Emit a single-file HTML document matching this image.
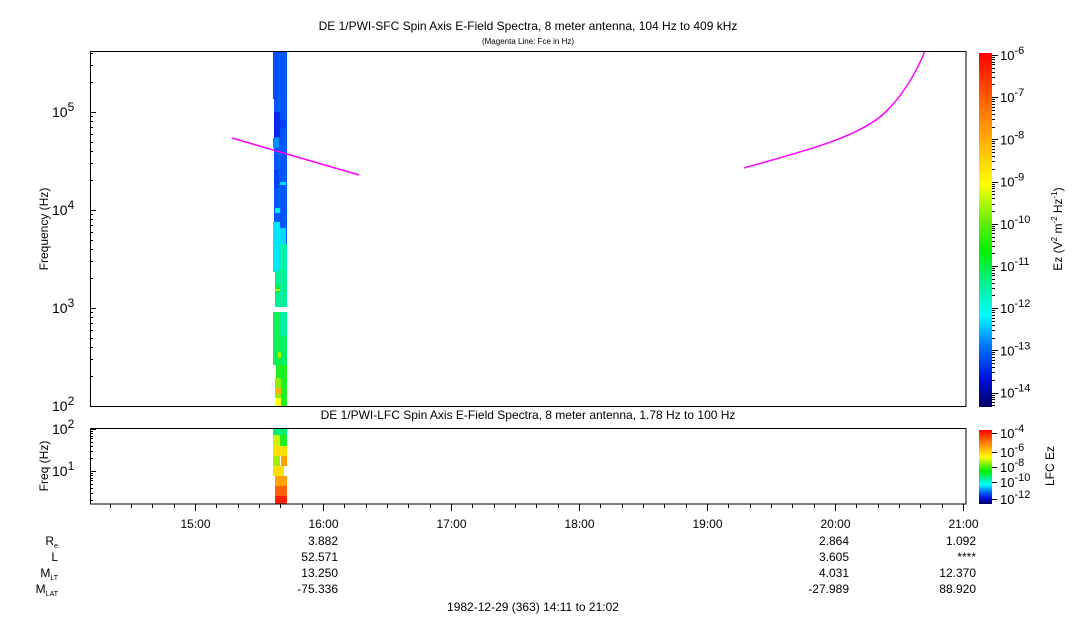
<!DOCTYPE html>
<html><head><meta charset="utf-8"><style>
html,body{margin:0;padding:0;background:#fff;}
svg{display:block;font-family:"Liberation Sans",sans-serif;}
</style></head><body>
<svg id="s" width="1083" height="620" viewBox="0 0 1083 620" xmlns="http://www.w3.org/2000/svg">
<defs>
<linearGradient id="cb" x1="0" y1="0" x2="0" y2="1">
<stop offset="0" stop-color="#ff0000"/>
<stop offset="0.13" stop-color="#ff6000"/>
<stop offset="0.25" stop-color="#ffb000"/>
<stop offset="0.37" stop-color="#ffff00"/>
<stop offset="0.48" stop-color="#60f000"/>
<stop offset="0.56" stop-color="#00f000"/>
<stop offset="0.66" stop-color="#00f0a0"/>
<stop offset="0.74" stop-color="#00ffff"/>
<stop offset="0.82" stop-color="#0080ff"/>
<stop offset="0.92" stop-color="#0010e0"/>
<stop offset="1" stop-color="#000060"/>
</linearGradient>
</defs>
<text x="528" y="30" font-size="12" text-anchor="middle">DE 1/PWI-SFC  Spin Axis E-Field Spectra, 8 meter antenna, 104 Hz to 409 kHz</text>
<text x="528" y="44" font-size="8" text-anchor="middle">(Magenta Line: Fce in Hz)</text>
<text x="528" y="419" font-size="12" text-anchor="middle">DE 1/PWI-LFC  Spin Axis E-Field Spectra, 8 meter antenna, 1.78 Hz to 100 Hz</text>

<!-- top spectra -->
<rect x="274" y="51" width="13" height="195" fill="#0058ff"/>
<rect x="273" y="51" width="6" height="48" fill="#0050ff"/>
<rect x="274" y="112" width="6" height="25" fill="#0028f0"/>
<rect x="280" y="120" width="6" height="8" fill="#0040ff"/>
<rect x="273" y="138" width="6" height="10" fill="#0090ff"/>
<rect x="274" y="170" width="5" height="18" fill="#0040f8"/>
<rect x="280" y="182" width="6" height="3" fill="#00e0ff"/>
<rect x="275" y="208" width="5" height="5" fill="#00f0e0"/>
<rect x="273" y="222" width="7" height="50" fill="#00e8ff"/>
<rect x="280" y="228" width="6" height="20" fill="#00d8ff"/>
<rect x="279" y="244" width="8" height="30" fill="#00f0b0"/>
<rect x="275" y="270" width="12" height="37" fill="#00f098"/>
<rect x="275" y="285" width="5" height="8" fill="#00f040"/>
<rect x="275" y="289" width="5" height="2" fill="#d0f000"/>
<rect x="273" y="312" width="6" height="53" fill="#10f050"/>
<rect x="279" y="312" width="8" height="30" fill="#00f0a0"/>
<rect x="279" y="336" width="8" height="30" fill="#00f060"/>
<rect x="278" y="352" width="3" height="6" fill="#a0f000"/>
<rect x="276" y="365" width="11" height="41" fill="#20f020"/>
<rect x="275" y="378" width="6" height="20" fill="#90f000"/>
<rect x="276" y="388" width="5" height="6" fill="#ffb000"/>
<rect x="276" y="398" width="5" height="8" fill="#ffff00"/>

<!-- bottom spectra -->
<rect x="273" y="429" width="14" height="6" fill="#00f070"/>
<rect x="273" y="435" width="7" height="11" fill="#d0f000"/>
<rect x="280" y="435" width="7" height="11" fill="#20f020"/>
<rect x="273" y="446" width="14" height="10" fill="#ffe000"/>
<rect x="273" y="456" width="7" height="10" fill="#a0f000"/>
<rect x="281" y="456" width="6" height="10" fill="#ffa000"/>
<rect x="273" y="466" width="11" height="10" fill="#ffe000"/>
<rect x="275" y="476" width="12" height="10" fill="#ffa000"/>
<rect x="275" y="486" width="12" height="10" fill="#ff6000"/>
<rect x="275" y="496" width="12" height="8" fill="#ff2000"/>

<!-- magenta -->
<path d="M232,138 Q290,155 359,175" fill="none" stroke="#ff00ff" stroke-width="1.5"/>
<path d="M744,168 C800,152 850,140 880,117 C900,100 915,75 925,51" fill="none" stroke="#ff00ff" stroke-width="1.5"/>

<!-- frames -->
<rect x="90.5" y="51.5" width="875.5" height="355" fill="none" stroke="#000" stroke-width="1"/>
<rect x="90.5" y="428.5" width="875.5" height="75.5" fill="none" stroke="#000" stroke-width="1"/>
<g id="ticks" stroke="#000" stroke-width="1"></g>
<g id="lbl" font-size="12"></g>

<text transform="translate(48,229) rotate(-90)" font-size="12" text-anchor="middle">Frequency (Hz)</text>
<text transform="translate(48,466) rotate(-90)" font-size="12" text-anchor="middle">Freq (Hz)</text>

<!-- colorbars -->
<rect x="979" y="53" width="13" height="354" fill="url(#cb)"/>
<rect x="979" y="430" width="13" height="74" fill="url(#cb)"/>
<text transform="translate(1062,229) rotate(-90)" font-size="12" text-anchor="middle">Ez (V<tspan font-size="8" dy="-5">2</tspan><tspan dy="5"> m</tspan><tspan font-size="8" dy="-5">-2</tspan><tspan dy="5"> Hz</tspan><tspan font-size="8" dy="-5">-1</tspan><tspan dy="5">)</tspan></text>
<text transform="translate(1054,466) rotate(-90)" font-size="12" text-anchor="middle">LFC Ez</text>

<!-- bottom labels -->
<g font-size="12" text-anchor="end">
<text x="58" y="545">R<tspan font-size="7" dy="3">e</tspan></text>
<text x="58" y="561">L</text>
<text x="58" y="577">M<tspan font-size="7" dy="3">LT</tspan></text>
<text x="58" y="593">M<tspan font-size="7" dy="3">LAT</tspan></text>
<text x="338" y="545">3.882</text><text x="338" y="561">52.571</text><text x="338" y="577">13.250</text><text x="338" y="593">-75.336</text>
<text x="849" y="545">2.864</text><text x="849" y="561">3.605</text><text x="849" y="577">4.031</text><text x="849" y="593">-27.989</text>
<text x="976" y="545">1.092</text><text x="976" y="561">****</text><text x="976" y="577">12.370</text><text x="976" y="593">88.920</text>
</g>
<text x="533" y="611" font-size="12" text-anchor="middle">1982-12-29 (363) 14:11 to 21:02</text>
</svg>
<script>
var NS="http://www.w3.org/2000/svg",T=document.getElementById('ticks'),L=document.getElementById('lbl');
function ln(x1,y1,x2,y2){var e=document.createElementNS(NS,'line');e.setAttribute('x1',x1);e.setAttribute('y1',y1);e.setAttribute('x2',x2);e.setAttribute('y2',y2);T.appendChild(e);}
function tx(x,y,s,anc,sup,fs){var e=document.createElementNS(NS,'text');e.setAttribute('x',x);e.setAttribute('y',y);if(anc)e.setAttribute('text-anchor',anc);if(fs)e.setAttribute('font-size',fs);e.textContent=s;if(sup){var t=document.createElementNS(NS,'tspan');t.setAttribute('dy','-6');t.setAttribute('font-size',fs?fs-2:10);t.textContent=sup;e.appendChild(t);}L.appendChild(e);}
// top y axis: 10^2 at 406, 98px/dec
for(var d=2;d<=5;d++){for(var m=1;m<10;m++){var y=406-98*(d-2+Math.log10(m));if(y<51)break;y=Math.round(y)+0.5;ln(90,y,m==1?96:93,y);}}
[[2,406],[3,308],[4,210],[5,112]].forEach(function(a){tx(52,a[1]+5,'10','start',String(a[0]),14);});
// bottom y: 10^2 at 429, 42/dec
for(var d=0;d<=2;d++){for(var m=1;m<10;m++){var y=429+84-42*(d+Math.log10(m));if(y>504||y<429)continue;y=Math.round(y)+0.5;ln(90,y,m==1?96:93,y);}}
tx(52,434,'10','start','2',14);tx(52,476,'10','start','1',14);
// time ticks
var x0=195-49/60*128;
for(var k=0;k<50;k++){var min=14*60+20+k*10;var x=195+(min-900)/60*128;if(x>966)break;x=Math.round(x)+0.5;var maj=min%60==0;ln(x,504,x,maj?511:508);if(maj){tx(x,528,(min/60)+':00','middle');}}
// colorbar ticks
var ex=['-6','-7','-8','-9','-10','-11','-12','-13','-14'];
for(var i=0;i<9;i++){var y=55+i*42.2;ln(992,Math.round(y)+0.5,998,Math.round(y)+0.5);for(var m=2;m<10;m++){var yy=y+42.2*(1-Math.log10(m));if(yy<407&&yy>53)ln(992,Math.round(yy)+0.5,995,Math.round(yy)+0.5);}tx(1000,y+5,'10','start',ex[i],13);}
var ex2=[['-4',433],['-6',452],['-8',467],['-10',482],['-12',499]];
ex2.forEach(function(a){ln(992,a[1]+0.5,997,a[1]+0.5);tx(1000,a[1]+5,'10','start',a[0],13);});
</script>
</body></html>
